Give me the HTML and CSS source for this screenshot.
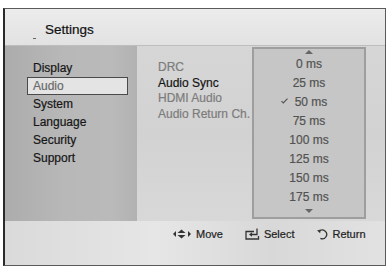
FILE: index.html
```html
<!DOCTYPE html>
<html lang="en">
<head>
    <meta charset="UTF-8">
    <meta name="viewport" content="width=device-width, initial-scale=1.0">
    <title>Settings - Audio Sync</title>
    <link rel="stylesheet" href="styles.css">
</head>
<body>
    <div class="screen">
        <div class="title-bar">
            <span class="cursor"></span>
            <h1>Settings</h1>
        </div>
        <div class="content">
            <ul class="menu">
                <li>Display</li>
                <li class="selected">Audio</li>
                <li>System</li>
                <li>Language</li>
                <li>Security</li>
                <li>Support</li>
            </ul>
            <ul class="options">
                <li class="dim">DRC</li>
                <li class="active">Audio Sync</li>
                <li class="dim">HDMI Audio</li>
                <li class="dim">Audio Return Ch.</li>
            </ul>
            <div class="popup">
                <div class="arrow up"></div>
                <ul class="values">
                    <li>0 ms</li>
                    <li>25 ms</li>
                    <li class="checked">
                        <svg class="check" width="7" height="6" viewBox="0 0 7 6"><polyline points="0.5,3.2 2.3,5 6.5,0.6" fill="none" stroke="#555" stroke-width="1.2"/></svg>50 ms
                    </li>
                    <li>75 ms</li>
                    <li>100 ms</li>
                    <li>125 ms</li>
                    <li>150 ms</li>
                    <li>175 ms</li>
                </ul>
                <div class="arrow down"></div>
            </div>
        </div>
        <div class="footer">
            <div class="hint">
                <svg width="19" height="10" viewBox="0 0 19 10">
                    <polygon points="3,2 0,5 3,8" fill="#333"/>
                    <polygon points="8.5,0.5 4.5,4 12.5,4" fill="#333"/>
                    <polygon points="8.5,9.5 4.5,6 12.5,6" fill="#333"/>
                    <polygon points="15,2 18,5 15,8" fill="#333"/>
                </svg>
                <span>Move</span>
            </div>
            <div class="hint">
                <svg width="15" height="12" viewBox="0 0 15 12">
                    <path d="M9 3.5 H1 V11 H13.5 V8" fill="none" stroke="#333" stroke-width="1.3"/>
                    <path d="M12 0.5 V6.5 H6" fill="none" stroke="#333" stroke-width="1.3"/>
                    <polygon points="4,6.5 7,4.3 7,8.7" fill="#333"/>
                </svg>
                <span>Select</span>
            </div>
            <div class="hint">
                <svg width="12" height="12" viewBox="0 0 12 12">
                    <path d="M3.2 3.2 A4.4 4.4 0 1 1 4.4 10.4" fill="none" stroke="#333" stroke-width="1.3"/>
                    <polygon points="1,2.6 4.6,1.4 4.2,5.2" fill="#333"/>
                </svg>
                <span>Return</span>
            </div>
        </div>
    </div>
</body>
</html>
```

FILE: styles.css
```css
body{
    margin: 0;
    background-color: #fff;
    font-family: "Liberation Sans", Arial, sans-serif;
    -webkit-text-stroke: 0.2px currentColor;
}
ul{
    list-style: none;
    margin: 0;
    padding: 0;
}
.screen{
    margin: 8px 1px 0 3px;
    border: 1px solid #5a5a5a;
    border-left: 2px solid #2a2a2a;
    display: flex;
    flex-direction: column;
}
.title-bar{
    height: 37px;
    border-bottom: 1px solid #bdbdbd;
    background: linear-gradient(180deg, #ececec, #e2e2e2);
    display: flex;
    align-items: flex-start;
    padding-left: 28px;
    box-sizing: border-box;
    position: relative;
}
.cursor{
    position: absolute;
    left: 28px;
    top: 29px;
    width: 3px;
    height: 1px;
    background-color: #666;
}
.title-bar h1{
    margin: 13px 0 0 12px;
    font-size: 13.5px;
    font-weight: normal;
    line-height: 15px;
    color: #111;
}
.content{
    height: 175px;
    display: flex;
    background: linear-gradient(180deg, #d6d6d6, #d2d2d2 50%, #d8d8d8);
}
.menu{
    width: 132px;
    padding-top: 13px;
    box-sizing: border-box;
    background: linear-gradient(90deg, #acacac, #b8b8b8 45%, #bababa 80%, #b2b2b2);
}
.menu li{
    margin-left: 22px;
    width: 101px;
    height: 18px;
    box-sizing: border-box;
    border: 1px solid transparent;
    padding-left: 5px;
    font-size: 12px;
    line-height: 16px;
    color: #161616;
}
.menu li.selected{
    background-color: #e4e4e4;
    border-color: #4a4a4a;
    color: #6a6a6a;
}
.options{
    width: 115px;
    padding: 14px 0 0 21px;
    box-sizing: border-box;
}
.options li{
    font-size: 12px;
    line-height: 15.5px;
    white-space: nowrap;
}
.options .dim{
    color: #7c7c7c;
}
.options .active{
    color: #151515;
}
.popup{
    margin-top: 1px;
    width: 114px;
    height: 172px;
    box-sizing: border-box;
    border: 2px solid #9e9e9e;
    background-color: #c6c6c6;
    padding-top: 1px;
}
.arrow{
    height: 5px;
    display: flex;
    justify-content: center;
}
.arrow::before{
    content: '';
    width: 0;
    height: 0;
    border-left: 4px solid transparent;
    border-right: 4px solid transparent;
}
.arrow.up::before{
    border-bottom: 4px solid #666;
}
.arrow.down{
    margin-top: 2px;
}
.arrow.down::before{
    border-top: 4px solid #666;
}
.values li{
    height: 19px;
    line-height: 19px;
    text-align: center;
    font-size: 12px;
    color: #525252;
    position: relative;
}
.values .checked{
    padding-left: 4px;
}
.check{
    position: absolute;
    left: 27px;
    top: 5px;
}
.footer{
    height: 44px;
    display: flex;
    gap: 22px;
    padding: 6px 0 0 168px;
    box-sizing: border-box;
    background: linear-gradient(90deg, #dadada, #e6e6e6 40%, #d8d8d8 70%, #e2e2e2);
}
.hint{
    display: flex;
    align-items: center;
    gap: 4px;
    height: 13px;
    font-size: 11px;
    color: #222;
}
```
